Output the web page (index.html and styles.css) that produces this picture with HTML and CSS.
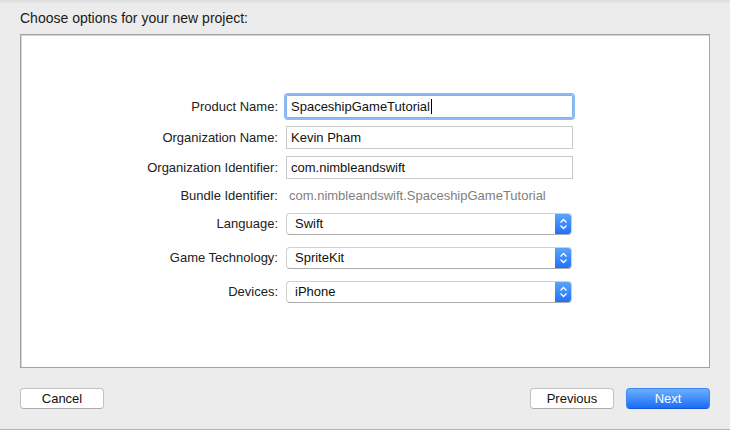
FILE: index.html
```html
<!DOCTYPE html>
<html>
<head>
<meta charset="utf-8">
<link rel="stylesheet" href="styles.css">
</head>
<body>
<div class="window">
  <div class="title">Choose options for your new project:</div>
  <div class="panel">
    <div class="form">
      <div class="row r-product">
        <label class="lbl">Product Name:</label>
        <div class="field focused">SpaceshipGameTutorial<span class="caret"></span></div>
      </div>
      <div class="row r-org">
        <label class="lbl">Organization Name:</label>
        <div class="field">Kevin Pham</div>
      </div>
      <div class="row r-orgid">
        <label class="lbl">Organization Identifier:</label>
        <div class="field">com.nimbleandswift</div>
      </div>
      <div class="row r-bundle">
        <label class="lbl">Bundle Identifier:</label>
        <div class="static">com.nimbleandswift.SpaceshipGameTutorial</div>
      </div>
      <div class="row r-lang">
        <label class="lbl">Language:</label>
        <div class="popup"><span class="ptext">Swift</span><span class="parrow"><svg width="9" height="12" viewBox="0 0 9 12"><path d="M1.5 4.5 L4.5 1.5 L7.5 4.5 M1.5 7.5 L4.5 10.5 L7.5 7.5" fill="none" stroke="#fff" stroke-width="1.3"/></svg></span></div>
      </div>
      <div class="row r-pop">
        <label class="lbl">Game Technology:</label>
        <div class="popup"><span class="ptext">SpriteKit</span><span class="parrow"><svg width="9" height="12" viewBox="0 0 9 12"><path d="M1.5 4.5 L4.5 1.5 L7.5 4.5 M1.5 7.5 L4.5 10.5 L7.5 7.5" fill="none" stroke="#fff" stroke-width="1.3"/></svg></span></div>
      </div>
      <div class="row r-pop">
        <label class="lbl">Devices:</label>
        <div class="popup"><span class="ptext">iPhone</span><span class="parrow"><svg width="9" height="12" viewBox="0 0 9 12"><path d="M1.5 4.5 L4.5 1.5 L7.5 4.5 M1.5 7.5 L4.5 10.5 L7.5 7.5" fill="none" stroke="#fff" stroke-width="1.3"/></svg></span></div>
      </div>
    </div>
  </div>
  <div class="footer">
    <button class="btn">Cancel</button>
    <div class="right">
      <button class="btn">Previous</button>
      <button class="btn primary">Next</button>
    </div>
  </div>
</div>
</body>
</html>
```

FILE: styles.css
```css
html, body {
  margin: 0;
  padding: 0;
}
body {
  width: 730px;
  height: 430px;
  overflow: hidden;
  background: #ececec;
  font-family: "Liberation Sans", Arial, sans-serif;
  font-size: 13px;
  color: #222;
}
.window {
  height: 429px;
  border-bottom: 1px solid #b4b4b4;
  background: linear-gradient(#dcdcdc 0, #ececec 4px, #ececec 100%);
  display: flex;
  flex-direction: column;
}
.title {
  height: 34px;
  padding-left: 20px;
  line-height: 36px;
  box-sizing: border-box;
  color: #1a1a1a;
  font-size: 14px;
}
.panel {
  margin: 0 20px;
  height: 334px;
  box-sizing: border-box;
  background: #fff;
  border: 1px solid #a2a2a2;
  box-shadow: inset 1px 1px 0 #d6d6d6;
  padding-top: 60px;
}
.form {
  display: flex;
  flex-direction: column;
}
.row {
  display: flex;
  align-items: center;
  gap: 8px;
}
.lbl {
  width: 257px;
  text-align: right;
  color: #222;
}
.field {
  width: 287px;
  height: 23px;
  box-sizing: border-box;
  border: 1px solid #c9c9c9;
  padding-left: 4px;
  line-height: 21px;
  color: #111;
  display: flex;
  align-items: center;
}
.field.focused {
  border-color: #7fb1ee;
  box-shadow: 0 0 0 2px #8dbaf4;
  border-radius: 2px;
}
.caret {
  display: inline-block;
  width: 1px;
  height: 15px;
  background: #000;
  margin-left: 1px;
}
.r-product { height: 23px; }
.r-org { height: 23px; margin-top: 8px; }
.r-orgid { height: 23px; margin-top: 7px; }
.r-bundle { height: 16px; margin-top: 8px; }
.r-lang { height: 23px; margin-top: 9px; }
.r-pop { height: 23px; margin-top: 11px; }
.static {
  color: #808080;
  padding-left: 3px;
}
.popup {
  width: 286px;
  height: 22px;
  box-sizing: border-box;
  border: 1px solid #d0d0d0;
  border-bottom-color: #ababab;
  border-radius: 4px;
  display: flex;
  align-items: center;
  background: #fff;
  overflow: hidden;
}
.ptext {
  flex: 1;
  padding-left: 8px;
  color: #111;
}
.parrow {
  width: 17px;
  height: 22px;
  margin-right: -1px;
  background: linear-gradient(#5da7fb, #1c6ff9);
  display: flex;
  align-items: center;
  justify-content: center;
  border-radius: 0 4px 4px 0;
}
.footer {
  display: flex;
  justify-content: space-between;
  padding: 20px 20px 0 20px;
}
.right {
  display: flex;
  gap: 12px;
}
.btn {
  width: 84px;
  height: 21px;
  box-sizing: border-box;
  border: 1px solid #c2c2c2;
  border-bottom-color: #acacac;
  border-radius: 4px;
  background: #fff;
  font-family: "Liberation Sans", Arial, sans-serif;
  font-size: 13px;
  color: #111;
  padding: 0;
  line-height: 19px;
}
.btn.primary {
  background: linear-gradient(#6bb0fd, #1a6cf8);
  border-color: #3f87f6;
  border-bottom-color: #1758d6;
  color: #fff;
}
```
